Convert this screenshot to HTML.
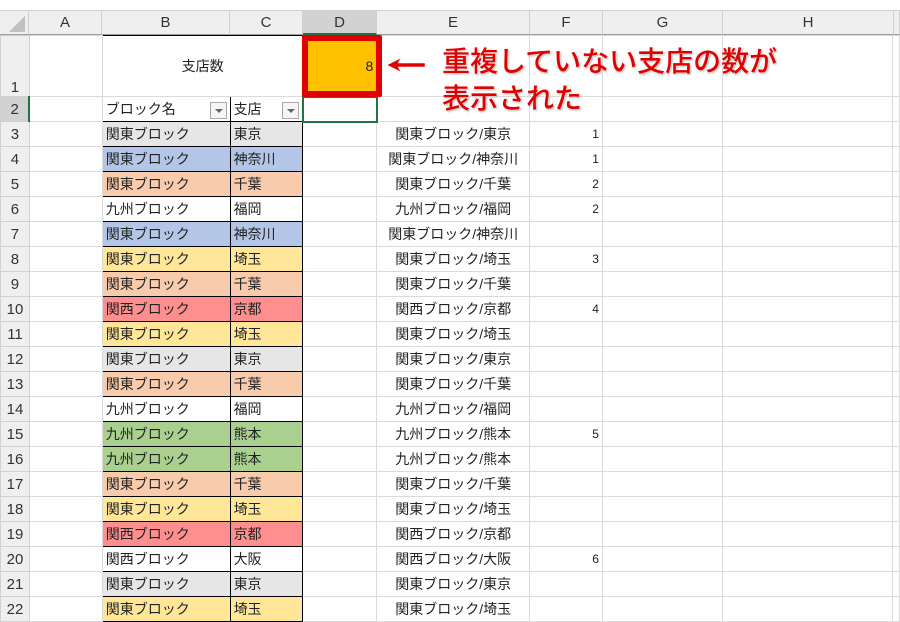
<!DOCTYPE html>
<html><head><meta charset="utf-8"><style>
body{margin:0;width:900px;height:621px;overflow:hidden;background:#fff;font-family:"Liberation Sans","Noto Sans CJK JP",sans-serif;position:relative}
.top{position:absolute;left:0;top:0;width:900px;height:11px;background:#fff;border-bottom:1px solid #d0d0d0;box-sizing:border-box}
.hdr{position:absolute;top:11px;height:24px;background:#efefef;border-right:1px solid #d0d0d0;border-bottom:1px solid #9e9e9e;box-sizing:border-box;text-align:center;font-size:15px;line-height:24px;color:#333}
table{position:absolute;left:0;top:35px;border-collapse:collapse;table-layout:fixed;font-size:14px;color:#222}
tr{height:25px}
td{border:1px solid #dadada;padding:0 3px;white-space:nowrap;overflow:hidden;height:25px;box-sizing:border-box}
td.rh{background:#efefef;text-align:center;border-color:#d0d0d0;color:#333;font-size:15px;padding:0}
td.b,td.c{border:1px solid #000}
td.e{text-align:center}
td.f{text-align:right;font-size:12px}
.g{background:#e7e6e6}.bl{background:#b4c6e7}.p{background:#f8cbad}.y{background:#ffe699}.r{background:#ff8f8f}.gr{background:#a9d08e}
.dd{display:inline-block;width:17px;height:17px;border:1px solid #aaa;background:#f5f5f5;float:right;margin-top:3px;position:relative;box-sizing:border-box}
.dd:after{content:"";position:absolute;left:4px;top:6px;border-left:4px solid transparent;border-right:4px solid transparent;border-top:4px solid #666}
.note{position:absolute;left:442px;color:#e00000;font-size:28px;font-weight:500;letter-spacing:0;text-shadow:0 0 2px #fff,1px 1px 2px #999,-1px -1px 0 #fff;font-family:"Noto Sans CJK JP",sans-serif;line-height:34px}
</style></head><body>
<div class="top"></div>
<div class="hdr" style="left:0;width:29px"><svg width="20" height="20" style="position:absolute;left:7px;top:3px"><polygon points="18,2 18,18 2,18" fill="#c0c0c0"/></svg></div>
<div class="hdr" style="left:29px;width:73px">A</div>
<div class="hdr" style="left:102px;width:128px">B</div>
<div class="hdr" style="left:230px;width:73px">C</div>
<div class="hdr" style="left:303px;width:74px;background:#d2d2d2;border-bottom:2px solid #217346">D</div>
<div class="hdr" style="left:377px;width:153px">E</div>
<div class="hdr" style="left:530px;width:73px">F</div>
<div class="hdr" style="left:603px;width:120px">G</div>
<div class="hdr" style="left:723px;width:171px">H</div>
<div class="hdr" style="left:894px;width:6px"></div>
<table>
<colgroup><col style="width:29px"><col style="width:73px"><col style="width:128px"><col style="width:73px"><col style="width:74px"><col style="width:153px"><col style="width:73px"><col style="width:120px"><col style="width:171px"><col style="width:6px"></colgroup>
<tr style="height:61px"><td class="rh" style="height:61px;vertical-align:bottom">1</td><td></td><td class="b" colspan="2" style="text-align:center;border-bottom-color:#dadada">支店数</td><td style="background:#ffc000;text-align:right">8</td><td></td><td></td><td></td><td></td><td></td></tr>
<tr><td class="rh" style="background:#d2d2d2;border-right:2px solid #217346">2</td><td></td><td class="b">ブロック名<span class="dd"></span></td><td class="c">支店<span class="dd"></span></td><td style="border:2px solid #217346"></td><td></td><td></td><td></td><td></td><td></td></tr>
<tr><td class="rh">3</td><td></td><td class="b g">関東ブロック</td><td class="c g">東京</td><td></td><td class="e">関東ブロック/東京</td><td class="f">1</td><td></td><td></td><td></td></tr>
<tr><td class="rh">4</td><td></td><td class="b bl">関東ブロック</td><td class="c bl">神奈川</td><td></td><td class="e">関東ブロック/神奈川</td><td class="f">1</td><td></td><td></td><td></td></tr>
<tr><td class="rh">5</td><td></td><td class="b p">関東ブロック</td><td class="c p">千葉</td><td></td><td class="e">関東ブロック/千葉</td><td class="f">2</td><td></td><td></td><td></td></tr>
<tr><td class="rh">6</td><td></td><td class="b">九州ブロック</td><td class="c">福岡</td><td></td><td class="e">九州ブロック/福岡</td><td class="f">2</td><td></td><td></td><td></td></tr>
<tr><td class="rh">7</td><td></td><td class="b bl">関東ブロック</td><td class="c bl">神奈川</td><td></td><td class="e">関東ブロック/神奈川</td><td class="f"></td><td></td><td></td><td></td></tr>
<tr><td class="rh">8</td><td></td><td class="b y">関東ブロック</td><td class="c y">埼玉</td><td></td><td class="e">関東ブロック/埼玉</td><td class="f">3</td><td></td><td></td><td></td></tr>
<tr><td class="rh">9</td><td></td><td class="b p">関東ブロック</td><td class="c p">千葉</td><td></td><td class="e">関東ブロック/千葉</td><td class="f"></td><td></td><td></td><td></td></tr>
<tr><td class="rh">10</td><td></td><td class="b r">関西ブロック</td><td class="c r">京都</td><td></td><td class="e">関西ブロック/京都</td><td class="f">4</td><td></td><td></td><td></td></tr>
<tr><td class="rh">11</td><td></td><td class="b y">関東ブロック</td><td class="c y">埼玉</td><td></td><td class="e">関東ブロック/埼玉</td><td class="f"></td><td></td><td></td><td></td></tr>
<tr><td class="rh">12</td><td></td><td class="b g">関東ブロック</td><td class="c g">東京</td><td></td><td class="e">関東ブロック/東京</td><td class="f"></td><td></td><td></td><td></td></tr>
<tr><td class="rh">13</td><td></td><td class="b p">関東ブロック</td><td class="c p">千葉</td><td></td><td class="e">関東ブロック/千葉</td><td class="f"></td><td></td><td></td><td></td></tr>
<tr><td class="rh">14</td><td></td><td class="b">九州ブロック</td><td class="c">福岡</td><td></td><td class="e">九州ブロック/福岡</td><td class="f"></td><td></td><td></td><td></td></tr>
<tr><td class="rh">15</td><td></td><td class="b gr">九州ブロック</td><td class="c gr">熊本</td><td></td><td class="e">九州ブロック/熊本</td><td class="f">5</td><td></td><td></td><td></td></tr>
<tr><td class="rh">16</td><td></td><td class="b gr">九州ブロック</td><td class="c gr">熊本</td><td></td><td class="e">九州ブロック/熊本</td><td class="f"></td><td></td><td></td><td></td></tr>
<tr><td class="rh">17</td><td></td><td class="b p">関東ブロック</td><td class="c p">千葉</td><td></td><td class="e">関東ブロック/千葉</td><td class="f"></td><td></td><td></td><td></td></tr>
<tr><td class="rh">18</td><td></td><td class="b y">関東ブロック</td><td class="c y">埼玉</td><td></td><td class="e">関東ブロック/埼玉</td><td class="f"></td><td></td><td></td><td></td></tr>
<tr><td class="rh">19</td><td></td><td class="b r">関西ブロック</td><td class="c r">京都</td><td></td><td class="e">関西ブロック/京都</td><td class="f"></td><td></td><td></td><td></td></tr>
<tr><td class="rh">20</td><td></td><td class="b">関西ブロック</td><td class="c">大阪</td><td></td><td class="e">関西ブロック/大阪</td><td class="f">6</td><td></td><td></td><td></td></tr>
<tr><td class="rh">21</td><td></td><td class="b g">関東ブロック</td><td class="c g">東京</td><td></td><td class="e">関東ブロック/東京</td><td class="f"></td><td></td><td></td><td></td></tr>
<tr><td class="rh">22</td><td></td><td class="b y">関東ブロック</td><td class="c y">埼玉</td><td></td><td class="e">関東ブロック/埼玉</td><td class="f"></td><td></td><td></td><td></td></tr>
</table>
<div style="position:absolute;left:302px;top:35px;width:80px;height:62px;border:6px solid #e00000;border-radius:2px;box-sizing:border-box"></div>
<svg style="position:absolute;left:385px;top:56px" width="44" height="18"><polygon points="2,9 16,2 13,7 40,7 40,11 13,11 16,16" fill="#e00000" stroke="#fff" stroke-width="0.5"/></svg>
<div class="note" style="top:43px">重複していない支店の数が</div>
<div class="note" style="top:80px">表示された</div>
</body></html>
